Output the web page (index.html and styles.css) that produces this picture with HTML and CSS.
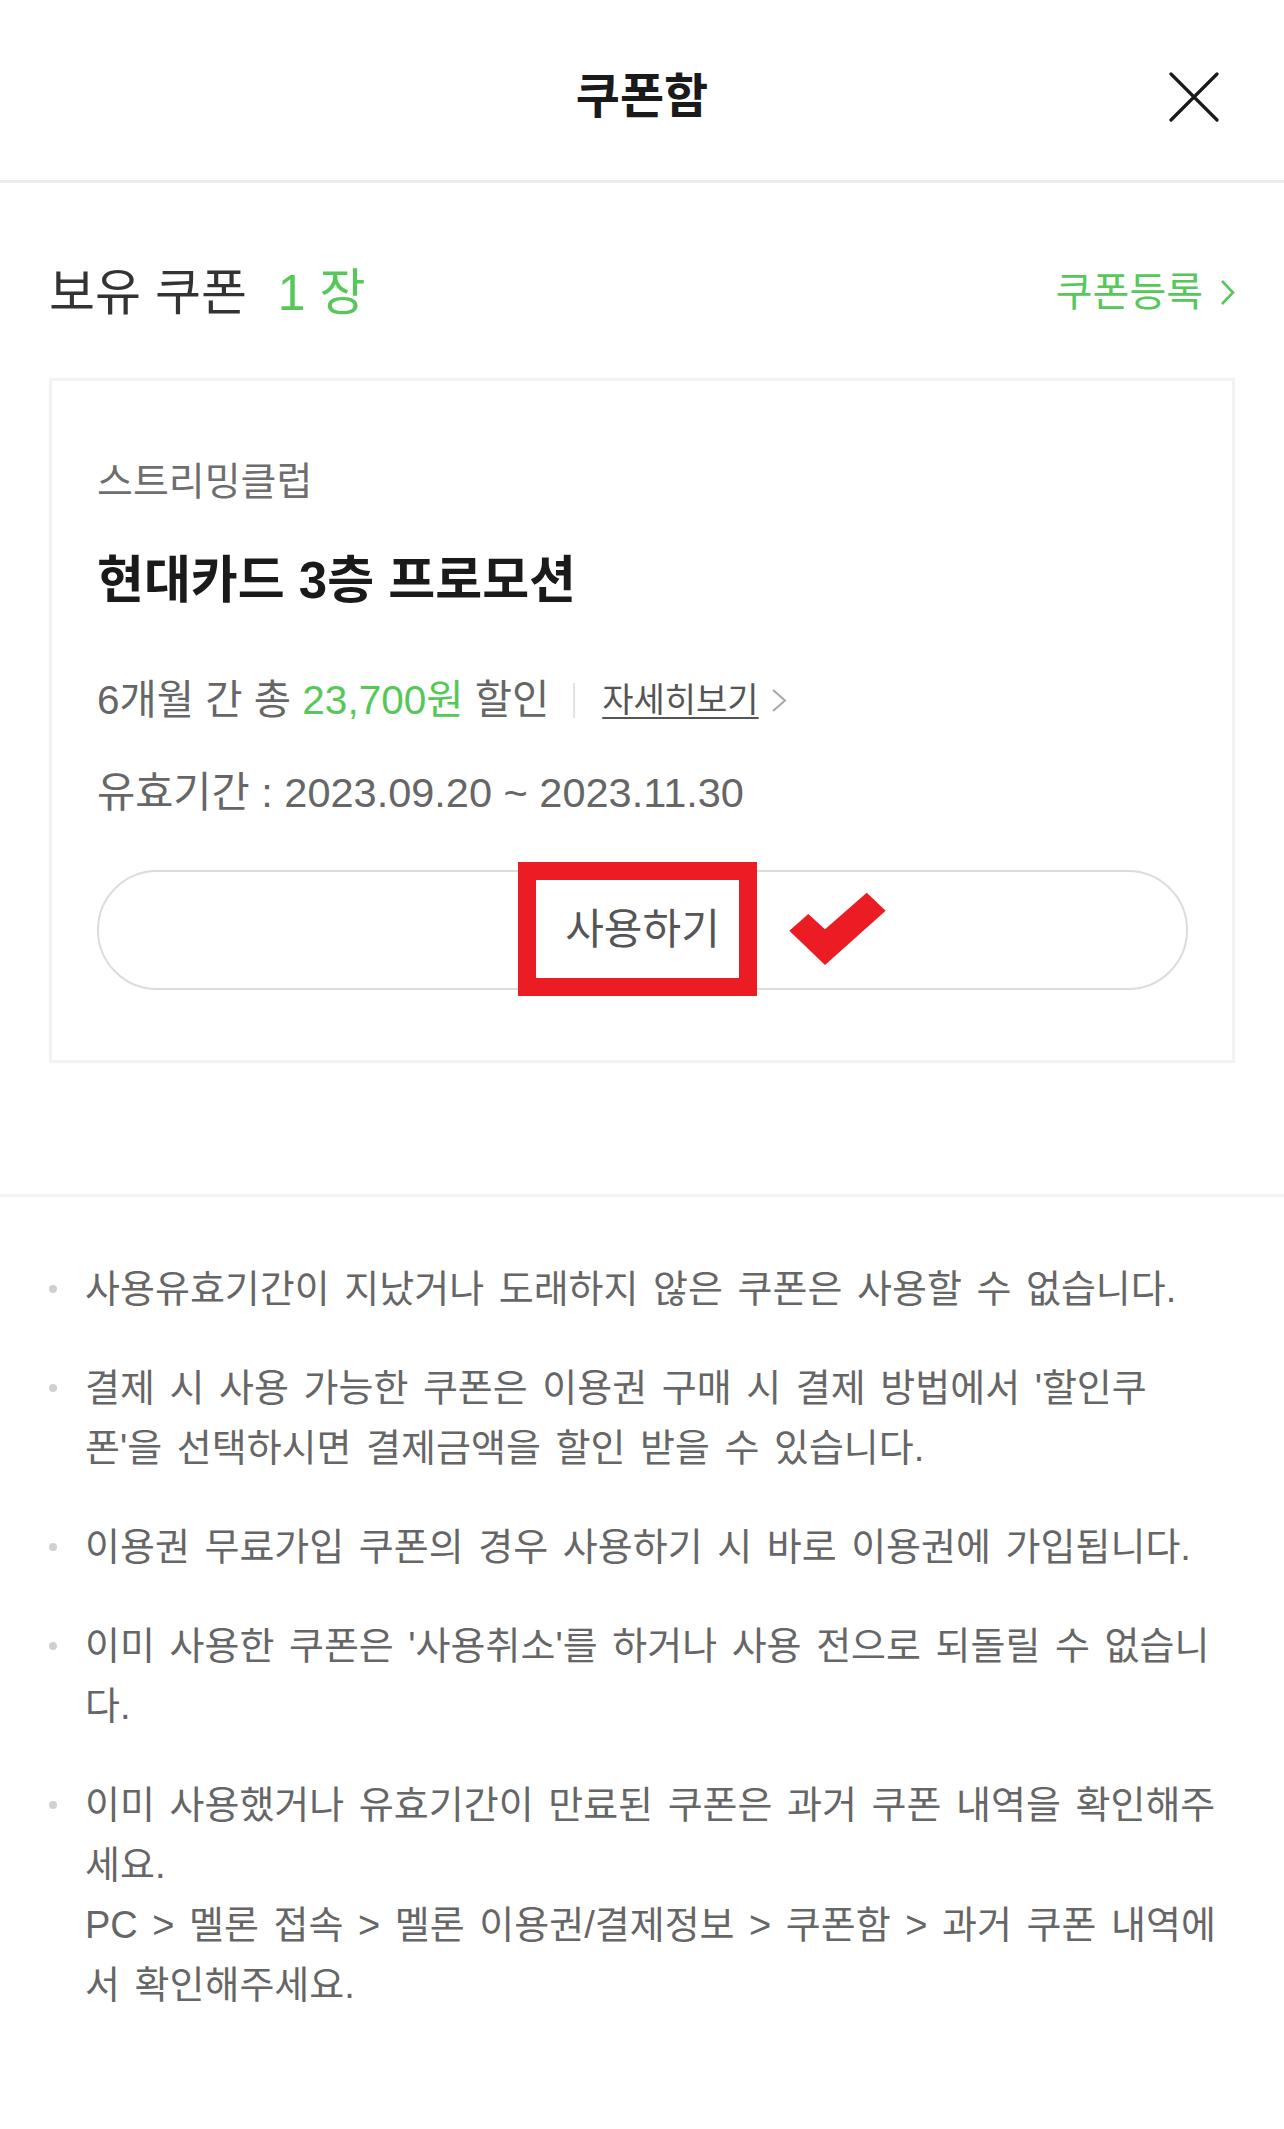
FILE: index.html
```html
<!DOCTYPE html>
<html lang="ko">
<head>
	<meta charset="utf-8">
	<title>쿠폰함</title>
	<link rel="stylesheet" href="styles.css">
</head>
<body>
	<div class="header">
		<h1 class="header-title">쿠폰함</h1>
		<button class="close-btn" type="button" aria-label="닫기">
			<svg width="50" height="50" viewBox="0 0 50 50"><path d="M2 2 L48 48 M48 2 L2 48" stroke="#1a1a1a" stroke-width="3.2" stroke-linecap="round" fill="none"/></svg>
		</button>
	</div>

	<div class="summary">
		<div class="summary-count">보유 쿠폰 <em>1 장</em></div>
		<a class="summary-link" href="#">쿠폰등록<svg width="15" height="27" viewBox="0 0 15 27"><path d="M2 2 L13 13.5 L2 25" stroke="#56c85a" stroke-width="2.6" fill="none"/></svg></a>
	</div>

	<div class="coupon">
		<p class="coupon-brand">스트리밍클럽</p>
		<h2 class="coupon-name">현대카드 3층 프로모션</h2>
		<div class="coupon-desc">
			<span class="desc-text">6개월 간 총 <em>23,700원</em> 할인</span>
			<i class="bar"></i>
			<a class="more" href="#">자세히보기</a>
			<svg class="more-arrow" width="16" height="25" viewBox="0 0 16 25"><path d="M2 2 L14 12.5 L2 23" stroke="#a8a8a8" stroke-width="2" fill="none"/></svg>
		</div>
		<p class="coupon-date">유효기간 : 2023.09.20 ~ 2023.11.30</p>
		<div class="use-btn">
			사용하기
			<span class="mark-box"></span>
			<svg class="mark-check" width="98" height="74" viewBox="0 0 98 74"><polygon points="0.3,38.7 19.3,22 36,37.3 77.7,0.7 96.7,18.7 36,73" fill="#ec1c24"/></svg>
		</div>
	</div>

	<ul class="notice">
		<li><p>사용유효기간이 지났거나 도래하지 않은 쿠폰은 사용할 수 없습니다.</p></li>
		<li><p>결제 시 사용 가능한 쿠폰은 이용권 구매 시 결제 방법에서 '할인쿠폰'을 선택하시면 결제금액을 할인 받을 수 있습니다.</p></li>
		<li><p>이용권 무료가입 쿠폰의 경우 사용하기 시 바로 이용권에 가입됩니다.</p></li>
		<li><p>이미 사용한 쿠폰은 '사용취소'를 하거나 사용 전으로 되돌릴 수 없습니다.</p></li>
		<li><p>이미 사용했거나 유효기간이 만료된 쿠폰은 과거 쿠폰 내역을 확인해주세요.<br>PC &gt; 멜론 접속 &gt; 멜론 이용권/결제정보 &gt; 쿠폰함 &gt; 과거 쿠폰 내역에서 확인해주세요.</p></li>
	</ul>
</body>
</html>
```

FILE: styles.css
```css
body {
	margin: 0;
	font-family: "Liberation Sans", "Noto Sans CJK KR", sans-serif;
	color: #333;
	background: #fff;
}

/* header */
.header {
	display: grid;
	grid-template-columns: 1fr auto 1fr;
	align-items: center;
	height: 166px;
	padding-top: 14px;
	border-bottom: 3px solid #ececec;
}
.header-title {
	grid-column: 2;
	margin: 0;
	font-size: 48px;
	line-height: 60px;
	font-weight: 700;
	color: #1a1a1a;
}
.close-btn {
	grid-column: 3;
	justify-self: end;
	display: block;
	width: 50px;
	height: 50px;
	margin-right: 65px;
	padding: 0;
	border: 0;
	background: none;
}
.close-btn svg {
	display: block;
}

/* count row */
.summary {
	display: flex;
	justify-content: space-between;
	align-items: center;
	height: 60px;
	padding: 80px 49px 0;
}
.summary-count {
	font-size: 50px;
	line-height: 60px;
	color: #333;
}
.summary-count em {
	font-style: normal;
	color: #56c85a;
	margin-left: 17px;
}
.summary-link {
	display: flex;
	align-items: center;
	margin-bottom: 2px;
	font-size: 40px;
	line-height: 50px;
	color: #56c85a;
	text-decoration: none;
}
.summary-link svg {
	margin-left: 17px;
}

/* coupon card */
.coupon {
	margin: 55px 49px 0;
	padding: 76px 44px 70px 45px;
	border: 3px solid #f2f2f2;
}
.coupon-brand {
	margin: 0;
	font-size: 39px;
	line-height: 50px;
	color: #6e6e6e;
}
.coupon-name {
	margin: 44px 0 0;
	font-size: 51px;
	line-height: 60px;
	font-weight: 700;
	color: #1a1a1a;
}
.coupon-desc {
	display: flex;
	align-items: center;
	height: 50px;
	margin-top: 64px;
}
.desc-text {
	font-size: 40.5px;
	line-height: 50px;
	color: #666;
}
.desc-text em {
	font-style: normal;
	color: #56c85a;
}
.bar {
	width: 2px;
	height: 35px;
	margin: 0 27px 0 24px;
	background: #e4e4e4;
}
.more {
	font-size: 34px;
	line-height: 50px;
	color: #555;
	text-decoration: underline;
	text-decoration-thickness: 2px;
	text-underline-offset: 5px;
}
.more-arrow {
	margin-left: 12px;
}
.coupon-date {
	margin: 43px 0 0;
	font-size: 41.5px;
	line-height: 50px;
	color: #666;
}
.use-btn {
	position: relative;
	display: flex;
	align-items: center;
	justify-content: center;
	height: 116px;
	margin-top: 52px;
	border: 2px solid #dcdcdc;
	border-radius: 60px;
	font-size: 42px;
	line-height: 50px;
	color: #555;
}
.mark-box {
	position: absolute;
	left: 419px;
	top: -10px;
	width: 239px;
	height: 134px;
	box-sizing: border-box;
	border: 18px solid #ec1c24;
}
.mark-check {
	position: absolute;
	left: 690px;
	top: 20px;
}

/* notice list */
.notice {
	margin: 131px 0 0;
	padding: 62px 63.5px 80px 49px;
	border-top: 3px solid #f3f3f3;
	list-style: none;
}
.notice li {
	display: grid;
	grid-template-columns: 8px 1fr;
	column-gap: 28px;
	font-size: 38px;
	line-height: 60px;
	word-spacing: 4px;
	color: #666;
}
.notice li + li {
	margin-top: 39px;
}
.notice li::before {
	content: "";
	width: 8px;
	height: 8px;
	margin-top: 26px;
	border-radius: 50%;
	background: #d0d0d0;
}
.notice p {
	margin: 0;
}
```
